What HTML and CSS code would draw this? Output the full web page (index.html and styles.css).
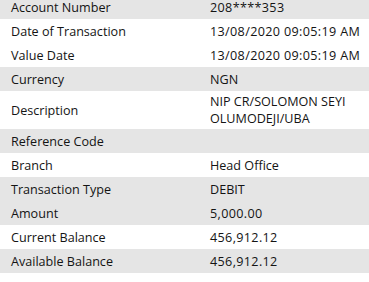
FILE: index.html
```html
<!DOCTYPE html>
<html>
<head>
<meta charset="utf-8">
<link rel="stylesheet" href="styles.css">
</head>
<body>
<table class="details">
  <tr class="shade"><td class="label">Account Number</td><td class="value num">208****353</td></tr>
  <tr><td class="label">Date of Transaction</td><td class="value num">13/08/2020 09:05:19 AM</td></tr>
  <tr><td class="label">Value Date</td><td class="value num">13/08/2020 09:05:19 AM</td></tr>
  <tr class="shade"><td class="label">Currency</td><td class="value">NGN</td></tr>
  <tr><td class="label">Description</td><td class="value">NIP CR/SOLOMON SEYI OLUMODEJI/UBA</td></tr>
  <tr class="shade"><td class="label">Reference Code</td><td class="value"></td></tr>
  <tr><td class="label">Branch</td><td class="value">Head Office</td></tr>
  <tr class="shade"><td class="label">Transaction Type</td><td class="value">DEBIT</td></tr>
  <tr class="shade"><td class="label">Amount</td><td class="value num">5,000.00</td></tr>
  <tr><td class="label">Current Balance</td><td class="value num">456,912.12</td></tr>
  <tr class="shade"><td class="label">Available Balance</td><td class="value num">456,912.12</td></tr>
</table>
</body>
</html>
```
FILE: styles.css
```css
html, body {
  margin: 0;
  padding: 0;
  background: #ffffff;
}
body {
  font-family: "Open Sans", "Segoe UI", sans-serif;
  font-size: 12.6px;
  color: #141414;
  overflow: hidden;
}
.details {
  width: 369px;
  border-collapse: collapse;
  margin-top: -5px;
}
.details tr {
  height: 24px;
}
.details td {
  padding: 2px 0;
  line-height: 17px;
  vertical-align: middle;
}
.details .label {
  width: 199px;
  padding-left: 11px;
}
.details .value {
  padding-right: 8px;
}
.details .num {
  letter-spacing: 0.35px;
}
.shade td {
  background: #e5e5e5;
}
```
